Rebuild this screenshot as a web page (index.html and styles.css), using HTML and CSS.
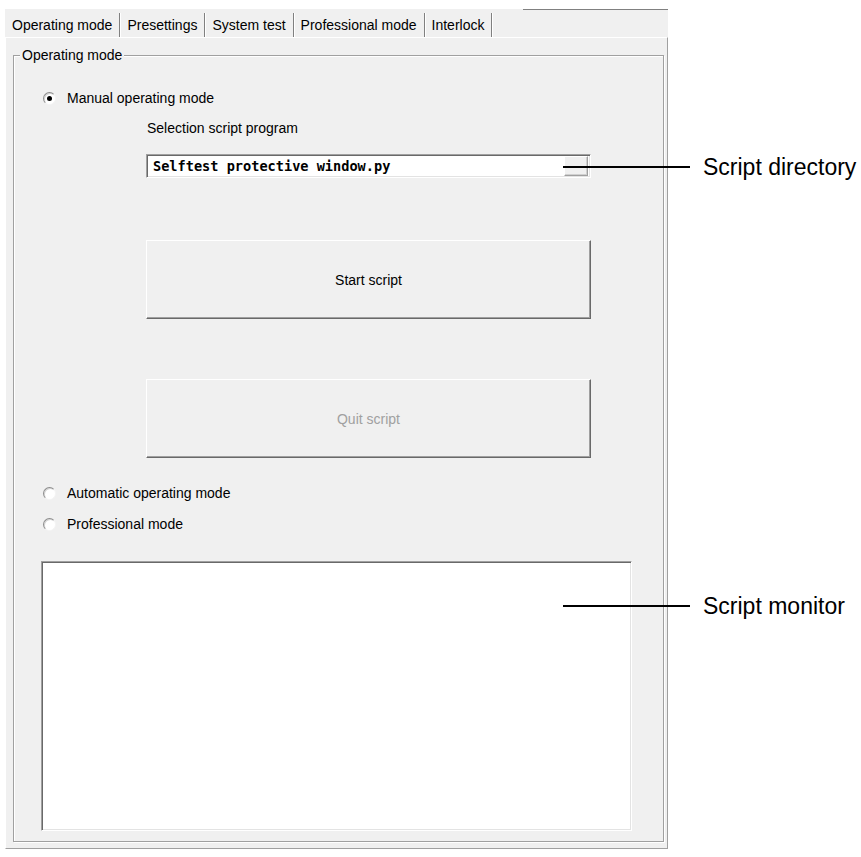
FILE: index.html
```html
<!DOCTYPE html>
<html lang="en">
<head>
  <meta charset="UTF-8">
  <meta name="viewport" content="width=device-width, initial-scale=1.0">
  <title>Operating mode</title>
  <link rel="stylesheet" href="styles.css">
</head>
<body>
  <div class="screen">
    <div class="window">
      <div class="tabs">
        <div class="tab tab-active">Operating mode</div>
        <div class="tab">Presettings</div>
        <div class="tab">System test</div>
        <div class="tab">Professional mode</div>
        <div class="tab">Interlock</div>
        <div class="tab-rest"></div>
      </div>
      <div class="panel">
        <fieldset class="group">
          <legend>Operating mode</legend>
          <label class="radio radio-manual"><span class="radio-box checked"></span>Manual operating mode</label>
          <div class="script-block">
            <div class="field-label">Selection script program</div>
            <div class="combo">
              <span class="combo-text">Selftest protective window.py</span>
              <span class="combo-button"></span>
            </div>
            <button class="cmd cmd-start" type="button">Start script</button>
            <button class="cmd cmd-quit" type="button" disabled>Quit script</button>
          </div>
          <label class="radio radio-auto"><span class="radio-box"></span>Automatic operating mode</label>
          <label class="radio radio-pro"><span class="radio-box"></span>Professional mode</label>
          <div class="monitor"></div>
        </fieldset>
      </div>
    </div>

    <div class="callout callout-directory"><span class="callout-line"></span><span>Script directory</span></div>
    <div class="callout callout-monitor"><span class="callout-line"></span><span>Script monitor</span></div>
  </div>
</body>
</html>
```
FILE: styles.css
```css
html {
  font-family: "Liberation Sans", Arial, sans-serif;
  font-size: 14px;
}

body {
  margin: 0;
  background: #fff;
  color: #000;
}

.screen {
  position: relative;
  width: 861px;
  height: 857px;
  overflow: hidden;
}

.window {
  width: 663px;
  margin-left: 5px;
  padding-top: 9px;
}

/* tab strip */
.tabs {
  display: flex;
  align-items: flex-end;
  height: 28px;
  background: #f0f0f0;
}

.tab {
  height: 24px;
  line-height: 24px;
  padding: 0 7px;
  border-right: 1px solid #808080;
  box-shadow: 1px 0 0 #fff;
  white-space: nowrap;
}

.tab-rest {
  flex: 1;
  align-self: flex-start;
  margin-left: 31px;
  border-top: 1px solid #808080;
}

/* tab body */
.panel {
  background: #f0f0f0;
  border-top: 1px solid #fff;
  border-left: 1px solid #fff;
  border-right: 1px solid #a0a0a0;
  border-bottom: 1px solid #a0a0a0;
  padding-bottom: 6px;
}

.group {
  margin: 9px 3px 0 7px;
  padding: 0 0 10px 0;
  min-width: 0;
  border: 1px solid #a0a0a0;
  box-shadow: inset 1px 1px 0 #fff, 1px 1px 0 #fff;
}

.group legend {
  margin-left: 6px;
  padding: 0 2px;
  line-height: 16px;
  background: #f0f0f0;
}

.radio {
  display: flex;
  align-items: center;
  gap: 11px;
  margin-left: 29px;
  line-height: 16px;
}

.radio-manual {
  margin-top: 27px;
}

.radio-auto {
  margin-top: 27px;
}

.radio-pro {
  margin-top: 15px;
}

.radio-box {
  position: relative;
  width: 11px;
  height: 11px;
  border-radius: 50%;
  background: #fff;
  border: 1px solid;
  border-color: #8c8c8c #f4f4f4 #f4f4f4 #8c8c8c;
  box-shadow: inset 1px 1px 0 #d4d4d4;
}

.radio-box.checked::after {
  content: "";
  position: absolute;
  left: 3px;
  top: 3px;
  width: 5px;
  height: 5px;
  border-radius: 50%;
  background: #000;
}

.script-block {
  margin-left: 132px;
  width: 445px;
}

.field-label {
  margin-top: 14px;
  padding-left: 1px;
  line-height: 16px;
}

.combo {
  display: flex;
  align-items: center;
  justify-content: space-between;
  margin-top: 18px;
  height: 24px;
  box-sizing: border-box;
  padding: 0 2px 0 6px;
  background: #fff;
  border: 1px solid;
  border-color: #a0a0a0 #fff #fff #a0a0a0;
  box-shadow: inset 1px 1px 0 #696969, inset -1px -1px 0 #e3e3e3;
}

.combo-text {
  font-family: "DejaVu Sans Mono", "Liberation Mono", monospace;
  font-weight: bold;
  font-size: 13.6px;
  line-height: 16px;
}

.combo-button {
  width: 22px;
  height: 18px;
  background: #f0f0f0;
  border: 1px solid;
  border-color: #fff #a0a0a0 #a0a0a0 #fff;
  box-shadow: inset -1px -1px 0 #d0d0d0;
}

.cmd {
  display: block;
  width: 100%;
  height: 79px;
  padding: 0;
  font: inherit;
  color: #000;
  background: #f0f0f0;
  border: 1px solid;
  border-color: #fff #696969 #696969 #fff;
  box-shadow: inset -1px -1px 0 #a0a0a0;
}

.cmd-start {
  margin-top: 62px;
}

.cmd-quit {
  margin-top: 60px;
}

.cmd:disabled {
  color: #a0a0a0;
}

.monitor {
  margin: 29px 0 0 27px;
  width: 591px;
  height: 270px;
  box-sizing: border-box;
  background: #fff;
  border: 1px solid;
  border-color: #a0a0a0 #fff #fff #a0a0a0;
  box-shadow: inset 1px 1px 0 #696969, inset -1px -1px 0 #e3e3e3;
}

/* annotation callouts drawn over the screenshot */
.callout {
  position: absolute;
  left: 563px;
  display: flex;
  align-items: center;
  gap: 13px;
  font-size: 23px;
  line-height: 28px;
  white-space: nowrap;
}

.callout-directory {
  top: 153px;
}

.callout-monitor {
  top: 592px;
}

.callout-line {
  width: 127px;
  height: 2px;
  background: #000;
}
```
